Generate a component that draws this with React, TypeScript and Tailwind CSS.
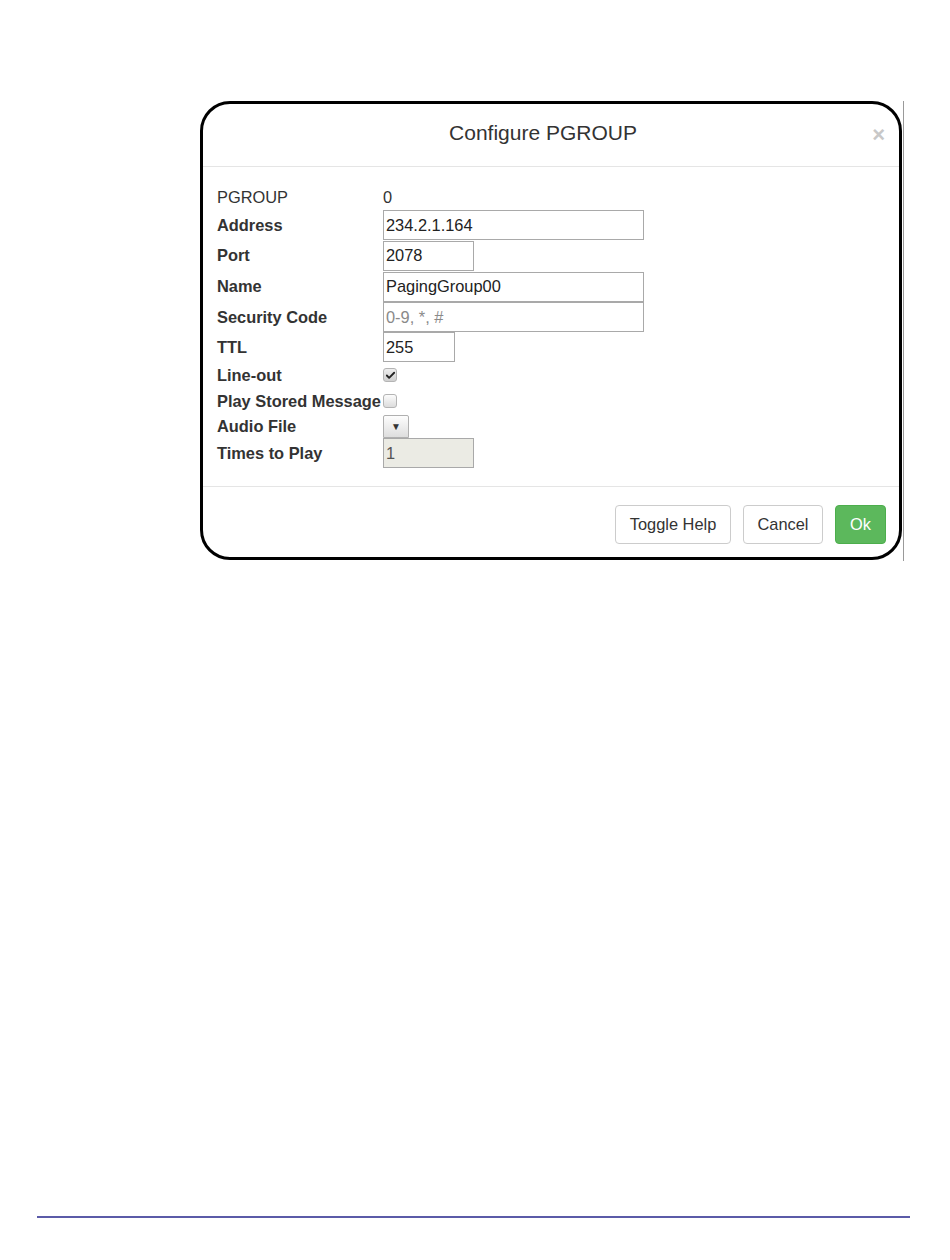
import { Check } from "lucide-react";

const FONT = { fontFamily: '"Liberation Sans", Arial, sans-serif' };

type Row = { label: string; h: string; bold?: boolean; field: React.ReactNode };

function TextBox({ value, w, placeholder, disabled }: { value?: string; w: string; placeholder?: string; disabled?: boolean }) {
  return (
    <div
      className={`flex h-[30px] items-center border border-[#a9a9a9] pl-[2px] text-[16.4px] ${w} ${
        disabled ? "bg-[#ebebe4] text-[#545454]" : "bg-white text-[#222]"
      }`}
    >
      {value ? <span>{value}</span> : <span className="text-[#8a8a8a]">{placeholder}</span>}
    </div>
  );
}

function Box({ checked }: { checked?: boolean }) {
  return (
    <span
      className={`grid h-[14px] w-[14px] place-items-center rounded-[3px] border border-[#b4b4b4] bg-gradient-to-b ${
        checked ? "from-[#eeeeee] to-[#cfcfcf]" : "from-[#fcfcfc] to-[#dcdcdc]"
      }`}
    >
      {checked && <Check className="h-[11px] w-[11px] text-[#222]" strokeWidth={4} />}
    </span>
  );
}

export default function App() {
  const rows: Row[] = [
    { label: "PGROUP", h: "h-[25px]", field: <span className="text-[16.4px] text-[#333]">0</span> },
    { label: "Address", h: "h-[30px]", bold: true, field: <TextBox value="234.2.1.164" w="w-[261px]" /> },
    { label: "Port", h: "h-[31px]", bold: true, field: <TextBox value="2078" w="w-[91px]" /> },
    { label: "Name", h: "h-[31px]", bold: true, field: <TextBox value="PagingGroup00" w="w-[261px]" /> },
    { label: "Security Code", h: "h-[30px]", bold: true, field: <TextBox placeholder="0-9, *, #" w="w-[261px]" /> },
    { label: "TTL", h: "h-[30px]", bold: true, field: <TextBox value="255" w="w-[72px]" /> },
    { label: "Line-out", h: "h-[26px]", bold: true, field: <Box checked /> },
    { label: "Play Stored Message", h: "h-[26px]", bold: true, field: <Box /> },
    {
      label: "Audio File",
      h: "h-[24px]",
      bold: true,
      field: (
        <span className="grid h-[23px] w-[26px] place-items-center rounded-t-[2px] border border-[#b0b0b0] bg-gradient-to-b from-[#fdfdfd] to-[#dedede] text-[10px] text-[#333]">
          ▼
        </span>
      ),
    },
    { label: "Times to Play", h: "h-[30px]", bold: true, field: <TextBox value="1" w="w-[91px]" disabled /> },
  ];

  return (
    <div className="min-h-[1260px] bg-white pt-[101px]" style={FONT}>
      <div className="ml-[200px] flex w-[705px]">
        <div className="h-[459px] w-[702px] rounded-[30px] border-[3px] border-black bg-white">
          <div className="relative flex h-[63px] items-center justify-center border-b border-[#e5e5e5] pb-[4px] pr-[16px]">
            <span className="text-[21px] text-[#333]">Configure PGROUP</span>
            <span className="absolute right-[14px] top-[14px] text-[22px] font-bold text-[#c8c8c8]">×</span>
          </div>
          <div className="pl-[14px] pt-[18px] pb-[18px]">
            {rows.map((r) => (
              <div key={r.label} className={`flex items-center ${r.h}`}>
                <span
                  className={`w-[166px] whitespace-nowrap text-[16.4px] text-[#333] ${r.bold ? "font-bold" : ""}`}
                >
                  {r.label}
                </span>
                {r.field}
              </div>
            ))}
          </div>
          <div className="flex h-[69px] justify-end gap-[12px] border-t border-[#e5e5e5] pr-[13px] pt-[18px]">
            <button className="h-[39px] w-[116px] rounded-[4px] border border-[#ccc] bg-white text-[16.4px] text-[#333]">
              Toggle Help
            </button>
            <button className="h-[39px] w-[80px] rounded-[4px] border border-[#ccc] bg-white text-[16.4px] text-[#333]">
              Cancel
            </button>
            <button className="h-[39px] w-[51px] rounded-[4px] border border-[#4cae4c] bg-[#5cb85c] text-[16.4px] text-white">
              Ok
            </button>
          </div>
        </div>
        <div className="ml-[1px] h-[460px] w-px bg-[#9a9a9a]" />
      </div>
      <div className="ml-[37px] mt-[655px] h-[2px] w-[873px] bg-[#5b5ba8]" />
    </div>
  );
}
